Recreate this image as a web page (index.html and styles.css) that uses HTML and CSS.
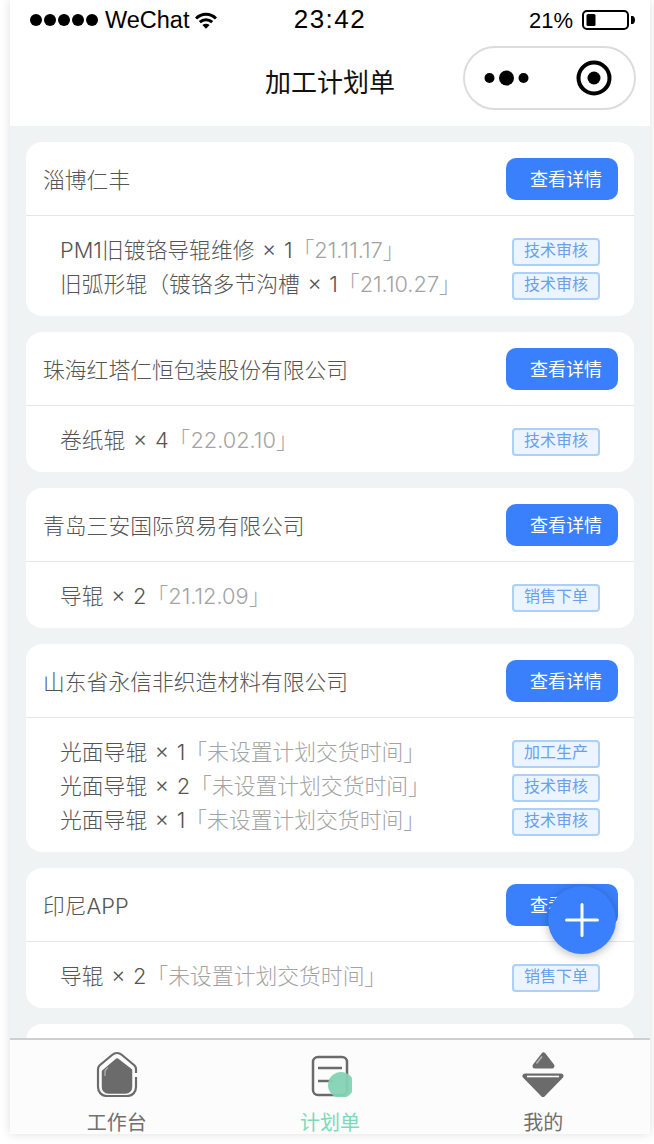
FILE: index.html
```html
<!DOCTYPE html>
<html lang="zh-CN">
<head>
<meta charset="utf-8">
<title>加工计划单</title>
<link rel="stylesheet" href="styles.css">
</head>
<body>
<div class="phone">
  <header class="status">
    <div class="status-left">
      <span class="signal"><i></i><i></i><i></i><i></i><i></i></span>
      <span class="carrier">WeChat</span>
      <svg class="wifi" viewBox="0 0 22 17" width="22" height="17"><path d="M1 6.500C6.600 .8 15.400 .8 21 6.500" fill="none" stroke="#000" stroke-width="3"/><path d="M4.800 10.200c3.600-3.400 8.800-3.400 12.400 0" fill="none" stroke="#000" stroke-width="3"/><path d="M7.400 13c2.100-1.700 5.100-1.700 7.200 0L11 16.800z" fill="#000"/></svg>
    </div>
    <div class="time">23:42</div>
    <div class="status-right">
      <span class="percent">21%</span>
      <svg class="battery" viewBox="0 0 54 20" width="54" height="20"><rect x="1" y="1" width="45" height="18" rx="4" fill="none" stroke="#000" stroke-width="2"/><rect x="4.500" y="4" width="9" height="12" rx="1.500" fill="#000"/><path d="M49 6h1.500c1.500 0 2.500 2 2.500 4s-1 4-2.500 4H49z" fill="#000"/></svg>
    </div>
  </header>

  <nav class="nav">
    <span></span>
    <h1 class="nav-title">加工计划单</h1>
    <div class="capsule">
      <svg class="capsule-dots" viewBox="0 0 46 16" width="46" height="16"><circle cx="5.500" cy="8" r="5" fill="#000"/><circle cx="22.500" cy="8" r="7.500" fill="#000"/><circle cx="39.500" cy="8" r="5" fill="#000"/></svg>
      <svg class="capsule-target" viewBox="0 0 36 36" width="36" height="36"><circle cx="18" cy="18" r="15.500" fill="none" stroke="#000" stroke-width="4"/><circle cx="18" cy="18" r="6.500" fill="#000"/></svg>
    </div>
  </nav>

  <main class="list">
    <section class="card">
      <div class="card-head"><span class="company">淄博仁丰</span><span class="detail-btn">查看详情</span></div>
      <div class="card-body">
        <div class="row"><span class="item">PM1旧镀铬导辊维修 × 1<span class="date">「21.11.17」</span></span><span class="tag">技术审核</span></div>
        <div class="row"><span class="item">旧弧形辊（镀铬多节沟槽 × 1<span class="date">「21.10.27」</span></span><span class="tag">技术审核</span></div>
      </div>
    </section>
    <section class="card">
      <div class="card-head"><span class="company">珠海红塔仁恒包装股份有限公司</span><span class="detail-btn">查看详情</span></div>
      <div class="card-body">
        <div class="row"><span class="item">卷纸辊 × 4<span class="date">「22.02.10」</span></span><span class="tag">技术审核</span></div>
      </div>
    </section>
    <section class="card">
      <div class="card-head"><span class="company">青岛三安国际贸易有限公司</span><span class="detail-btn">查看详情</span></div>
      <div class="card-body">
        <div class="row"><span class="item">导辊 × 2<span class="date">「21.12.09」</span></span><span class="tag">销售下单</span></div>
      </div>
    </section>
    <section class="card">
      <div class="card-head"><span class="company">山东省永信非织造材料有限公司</span><span class="detail-btn">查看详情</span></div>
      <div class="card-body">
        <div class="row"><span class="item">光面导辊 × 1<span class="date">「未设置计划交货时间」</span></span><span class="tag">加工生产</span></div>
        <div class="row"><span class="item">光面导辊 × 2<span class="date">「未设置计划交货时间」</span></span><span class="tag">技术审核</span></div>
        <div class="row"><span class="item">光面导辊 × 1<span class="date">「未设置计划交货时间」</span></span><span class="tag">技术审核</span></div>
      </div>
    </section>
    <section class="card">
      <div class="card-head"><span class="company">印尼APP</span><span class="detail-btn">查看详情</span></div>
      <div class="card-body">
        <div class="row"><span class="item">导辊 × 2<span class="date">「未设置计划交货时间」</span></span><span class="tag">销售下单</span></div>
      </div>
    </section>
    <section class="card card-next"></section>
  </main>

  <footer class="tabbar">
    <div class="tab">
      <svg class="tab-icon" viewBox="0 0 44 46" width="44" height="46"><path d="M41 22V18c0-1.500-.6-2.500-1.500-3.500L27 4c-3-2.600-7-2.600-10 0L4.500 14.500C3.500 15.500 3 16.500 3 18V36c0 5 3.500 9 9 9H32c5.500 0 9-4 9-9V26" fill="none" stroke="#6b6b6b" stroke-width="2.200"/><path d="M22 9L35.500 19.500V36c0 3-2 5-5 5H13.500c-3 0-5-2-5-5V20.500z" fill="#6b6b6b" stroke="#6b6b6b" stroke-width="3.500" stroke-linejoin="round"/><path d="M10 25v-4c0-1.500 1-3 3-4.500" fill="none" stroke="#a8a8a8" stroke-width="1.500"/></svg>
      <span class="tab-label">工作台</span>
    </div>
    <div class="tab tab-active">
      <svg class="tab-icon" viewBox="0 0 44 46" width="44" height="46"><rect x="5" y="6" width="34" height="38" rx="5" fill="none" stroke="#6b6b6b" stroke-width="2.500"/><path d="M10 17h24M10 30h15" fill="none" stroke="#6b6b6b" stroke-width="2.500"/><circle cx="33" cy="34" r="13" fill="#84d3b6" fill-opacity=".95"/></svg>
      <span class="tab-label">计划单</span>
    </div>
    <div class="tab">
      <svg class="tab-icon" viewBox="0 0 44 46" width="44" height="46"><path d="M22.500 4L31 15H14z" fill="#6b6b6b" stroke="#6b6b6b" stroke-width="5" stroke-linejoin="round"/><path d="M4 25H40L22 43.500z" fill="#6b6b6b" stroke="#6b6b6b" stroke-width="5" stroke-linejoin="round"/><path d="M6 25.500H38" fill="none" stroke="#fff" stroke-width="1.600"/><path d="M15.500 12.500l5.500-7" fill="none" stroke="#b5b5b5" stroke-width="1.500"/></svg>
      <span class="tab-label">我的</span>
    </div>
  </footer>

  <button class="fab" type="button" aria-label="新增">
    <svg viewBox="0 0 34 34" width="34" height="34"><path d="M17 1.500v31M1.500 17h31" fill="none" stroke="#fff" stroke-width="3" stroke-linecap="round"/></svg>
  </button>
</div>
</body>
</html>
```
FILE: styles.css
```css
* { box-sizing: border-box; }
html, body { margin: 0; padding: 0; height: 100%; background: #fff; overflow: hidden; }
body { font-family: Inter, "Noto Sans CJK SC", sans-serif; }

.phone {
  position: relative;
  width: 640px;
  height: 1134px;
  margin-left: 10px;
  display: flex;
  flex-direction: column;
  background: #eff3f4;
  overflow: hidden;
  box-shadow: 0 0 10px rgba(0, 0, 0, .13);
}

.status {
  flex: none;
  height: 46px;
  background: #fff;
  display: grid;
  grid-template-columns: 1fr auto 1fr;
  align-items: start;
  color: #000;
  padding: 0 14px 0 20px;
}
.status-left { display: flex; align-items: center; height: 40px; }
.signal { display: flex; gap: 2px; }
.signal i { width: 12px; height: 12px; border-radius: 50%; background: #000; }
.carrier { font-size: 23.500px; line-height: 40px; margin-left: 7px; font-family: "Liberation Sans", sans-serif; }
.wifi { margin-left: 6px; }
.time { font-size: 26px; line-height: 38px; letter-spacing: 1.500px; font-family: "Liberation Sans", sans-serif; margin-left: -6px; }
.status-right { display: flex; justify-content: flex-end; align-items: center; height: 42px; }
.percent { font-size: 22px; line-height: 44px; margin-right: 9px; font-family: "Liberation Sans", sans-serif; }
.battery { margin-top: -3px; }

.nav {
  flex: none;
  height: 80px;
  background: #fff;
  display: grid;
  grid-template-columns: 1fr auto 1fr;
  align-items: center;
  padding-bottom: 6px;
}
.nav-title { margin: 0; font-size: 26px; font-weight: 400; line-height: 36px; color: #111; }
.capsule {
  justify-self: end;
  align-self: start;
  margin-right: 14px;
  width: 173px;
  height: 64px;
  border: 2px solid #dcdcdc;
  border-radius: 32px;
  display: flex;
  align-items: center;
  padding-left: 19px;
}
.capsule-target { margin-left: 46px; }

.list {
  flex: 1;
  min-height: 0;
  overflow: hidden;
  padding: 16px 16px 0;
  display: flex;
  flex-direction: column;
  gap: 16px;
}
.card { flex: none; background: #fff; border-radius: 16px; }
.card-next { height: 120px; }
.card-head {
  height: 74px;
  display: flex;
  align-items: center;
  justify-content: space-between;
  padding: 0 16px 0 17px;
  border-bottom: 1px solid #e6e6e6;
}
.company { font-size: 21.800px; font-weight: 300; color: #555; line-height: 30px; margin-top: 2px; }
.detail-btn {
  width: 112px;
  height: 42px;
  border-radius: 10px;
  background: #3a7ffb;
  color: #fff;
  font-size: 18px;
  line-height: 44px;
  padding-left: 24px;
  white-space: nowrap;
}
.card-body { padding: 19px 34px 13px 34px; }
.row { height: 34px; display: flex; align-items: center; justify-content: space-between; }
.item { font-size: 21.800px; font-weight: 300; color: #555; line-height: 30px; margin-top: -4px; word-spacing: 1.500px; white-space: nowrap; }
.date { color: #a3a3a3; }
.tag {
  width: 88px;
  height: 28px;
  border: 2px solid #abd0fb;
  border-radius: 4px;
  background: #ecf5ff;
  color: #6a9ff0;
  font-size: 16px;
  line-height: 21px;
  text-align: center;
  white-space: nowrap;
}

.tabbar {
  flex: none;
  height: 96px;
  background: #fcfcfc;
  border-top: 2px solid #cfcfcf;
  display: grid;
  grid-template-columns: repeat(3, 1fr);
}
.tab { display: flex; flex-direction: column; align-items: center; padding-top: 11px; }
.tab-icon { display: block; }
.tab-label { font-size: 20px; line-height: 22px; color: #707070; margin-top: 15px; }
.tab-active .tab-label { color: #7fd8ba; }

.fab {
  position: absolute;
  left: 538px;
  top: 886px;
  width: 68px;
  height: 68px;
  border: 0;
  padding: 0;
  border-radius: 50%;
  background: #3a7ffb;
  box-shadow: 0 2px 10px rgba(0, 0, 0, .28);
  display: flex;
  align-items: center;
  justify-content: center;
}
```
